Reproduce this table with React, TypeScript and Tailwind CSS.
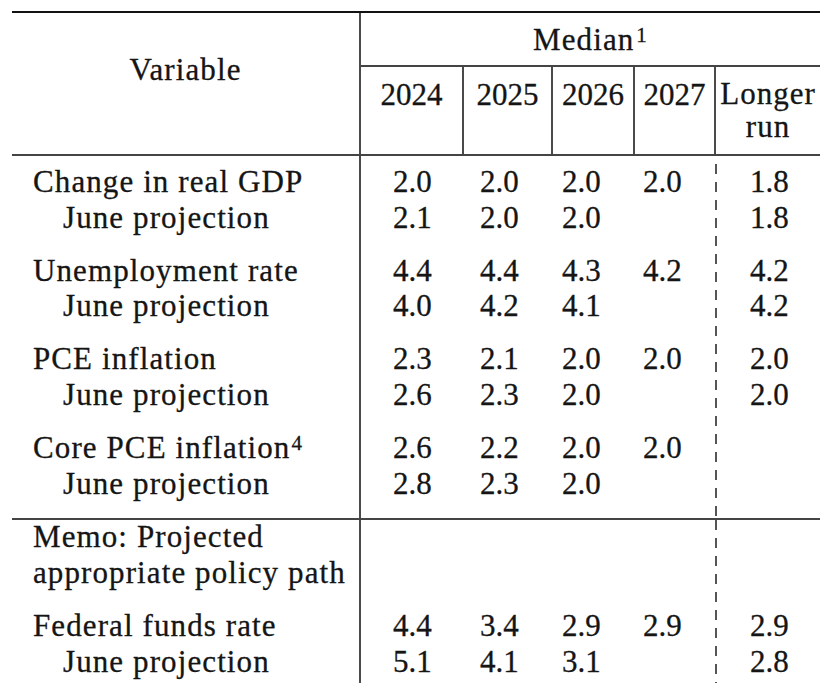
import React from "react";

type Group = {
  label: string;
  sup?: string;
  cur: string[];
  june: string[];
};

const upper: Group[] = [
  { label: "Change in real GDP", cur: ["2.0", "2.0", "2.0", "2.0", "1.8"], june: ["2.1", "2.0", "2.0", "", "1.8"] },
  { label: "Unemployment rate", cur: ["4.4", "4.4", "4.3", "4.2", "4.2"], june: ["4.0", "4.2", "4.1", "", "4.2"] },
  { label: "PCE inflation", cur: ["2.3", "2.1", "2.0", "2.0", "2.0"], june: ["2.6", "2.3", "2.0", "", "2.0"] },
  { label: "Core PCE inflation", sup: "4", cur: ["2.6", "2.2", "2.0", "2.0", ""], june: ["2.8", "2.3", "2.0", "", ""] },
];

const funds: Group = {
  label: "Federal funds rate",
  cur: ["4.4", "3.4", "2.9", "2.9", "2.9"],
  june: ["5.1", "4.1", "3.1", "", "2.8"],
};

// value columns: widths line up with the year columns, padding puts the figures where they sit
const colCls = [
  "w-[102px] pl-[32px]",
  "w-[89px] pl-[17px]",
  "w-[82px] pl-[10px]",
  "w-[81px] pl-[9px]",
];

const dashed =
  "flex-1 pl-[35px] bg-[repeating-linear-gradient(to_bottom,#555_0px,#555_10px,transparent_10px,transparent_18px)] bg-no-repeat bg-left bg-size-[2px_100%]";

const Line = ({ children }: { children?: React.ReactNode }) => (
  <div className="h-[35.5px] leading-[35.5px] whitespace-nowrap">{children}</div>
);

const ValueCol = ({ groups, i, className }: { groups: Group[]; i: number; className: string }) => (
  <div className={`flex flex-col gap-[17.7px] tracking-normal ${className}`}>
    {groups.map((g) => (
      <div key={g.label}>
        <Line>{g.cur[i]}</Line>
        <Line>{g.june[i]}</Line>
      </div>
    ))}
  </div>
);

const Label = ({ g }: { g: Group }) => (
  <div>
    <Line>
      {g.label}
      {g.sup && <sup className="text-[21px] -top-2 ml-[1px]">{g.sup}</sup>}
    </Line>
    <Line>
      <span className="pl-[30px]">June projection</span>
    </Line>
  </div>
);

const App = () => {
  return (
    <div className="min-h-[689px] bg-white pt-[11px] font-[family-name:Liberation_Serif,serif] text-[31px] tracking-[1.1px] text-[#151515] [-webkit-text-stroke:0.3px_#151515]">
      <div className="ml-[12px] w-[808px]">
        {/* header */}
        <div className="flex border-t-2 border-b-2 border-t-[#111] border-b-[#444]">
          <div className="w-[347px] pt-[39px] text-center">
            <Line>Variable</Line>
          </div>
          <div className="flex flex-1 flex-col border-l-2 border-[#4a4a4a]">
            <div className="h-[54px] border-b-2 border-[#444] pt-[9px] text-center">
              <Line>
                Median<sup className="text-[21px] -top-2 ml-[2px]">1</sup>
              </Line>
            </div>
            <div className="flex h-[87px] text-center tracking-normal">
              <div className="w-[103px] border-r-2 border-[#4a4a4a] pt-[9.5px]"><Line>2024</Line></div>
              <div className="w-[89px] border-r-2 border-[#4a4a4a] pt-[9.5px]"><Line>2025</Line></div>
              <div className="w-[82px] border-r-2 border-[#4a4a4a] pt-[9.5px]"><Line>2026</Line></div>
              <div className="w-[81px] border-r-2 border-[#4a4a4a] pt-[9.5px]"><Line>2027</Line></div>
              <div className="flex-1 pt-[9.5px] leading-[33px] tracking-[1px]">
                <div>Longer</div>
                <div>run</div>
              </div>
            </div>
          </div>
        </div>

        {/* projections */}
        <div className="flex border-b-2 border-[#444]">
          <div className="flex w-[347px] flex-col gap-[17.7px] pt-[8px] pb-[17px] pl-[21px]">
            {upper.map((g) => (
              <Label key={g.label} g={g} />
            ))}
          </div>
          <div className="flex flex-1 border-l-2 border-[#4a4a4a] pt-[8px]">
            {colCls.map((c, i) => (
              <ValueCol key={i} groups={upper} i={i} className={c} />
            ))}
            <ValueCol groups={upper} i={4} className={dashed} />
          </div>
        </div>

        {/* memo */}
        <div className="flex h-[163px]">
          <div className="w-[347px] pl-[21px]">
            <div className="-mt-[1px]">
              <Line>Memo: Projected</Line>
              <Line>appropriate policy path</Line>
            </div>
            <div className="mt-[18px]">
              <Label g={funds} />
            </div>
          </div>
          <div className="flex flex-1 border-l-2 border-[#4a4a4a] tracking-normal">
            {[...colCls, dashed].map((c, i) => (
              <div key={i} className={c}>
                <div className="h-[70px]" />
                <div className="mt-[18px]">
                  <Line>{funds.cur[i]}</Line>
                  <Line>{funds.june[i]}</Line>
                </div>
              </div>
            ))}
          </div>
        </div>
      </div>
    </div>
  );
};

export default App;
